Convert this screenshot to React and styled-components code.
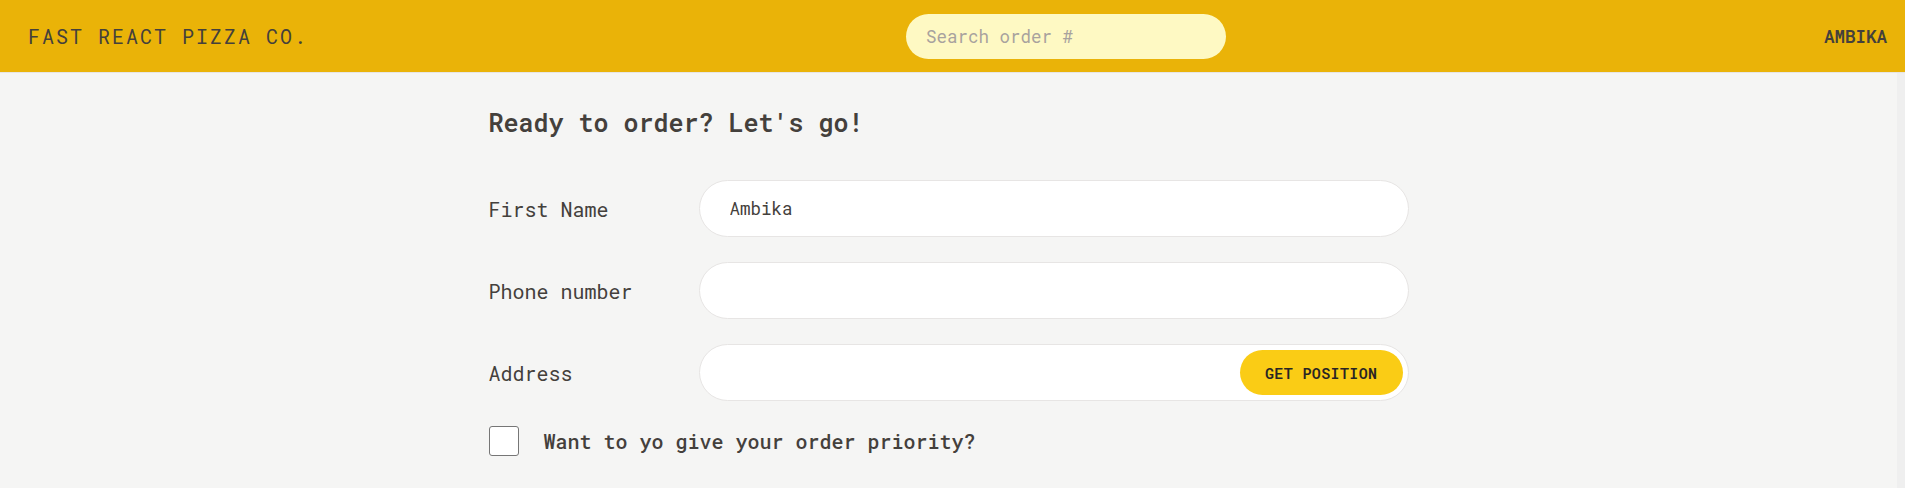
import React from 'react';
import styled, { createGlobalStyle } from 'styled-components';

const GlobalStyle = createGlobalStyle`
  html, body {
    margin: 0;
    padding: 0;
    height: 100%;
  }
  body {
    font-family: 'Roboto Mono', 'DejaVu Sans Mono', 'Liberation Mono', monospace;
    background-color: #f5f5f4;
    color: #44403c;
  }
  #root {
    height: 100%;
  }
`;

const Layout = styled.div`
  display: grid;
  grid-template-rows: auto 1fr;
  height: 100vh;
`;

const Header = styled.header`
  display: flex;
  align-items: center;
  justify-content: space-between;
  background-color: #eab308;
  padding: 13.5px 18px 13.5px 28px;
  border-bottom: 1px solid #e7e5e4;
  text-transform: uppercase;
`;

const Logo = styled.a`
  font-size: 20px;
  letter-spacing: 2px;
  color: #44403c;
  text-decoration: none;
`;

const SearchInput = styled.input`
  width: 320px;
  box-sizing: border-box;
  padding: 10px 20px;
  border: none;
  border-radius: 9999px;
  background-color: #fef9c3;
  font-family: inherit;
  font-size: 17.5px;
  line-height: 25px;
  color: #44403c;
  outline: none;

  &::placeholder {
    color: #a8a29e;
  }
`;

const UserName = styled.p`
  margin: 0;
  font-size: 17.5px;
  font-weight: 600;
  color: #44403c;
`;

/* the scroll area keeps a plain track strip on its right edge */
const Main = styled.div`
  overflow-y: auto;
  scrollbar-width: none;
  border-right: 8px solid #efefef;

  &::-webkit-scrollbar {
    display: none;
  }
`;

const Container = styled.main`
  max-width: 960px;
  margin: 0 auto;
  padding: 32px 20px 30px;
  box-sizing: border-box;
`;

const Title = styled.h2`
  margin: 0 0 40px;
  font-size: 25px;
  line-height: 35px;
  font-weight: 600;
`;

const Row = styled.div`
  display: flex;
  align-items: center;
  gap: 10px;
  margin-bottom: 25px;
`;

const Label = styled.label`
  flex: 0 0 200px;
  font-size: 20px;
  line-height: 30px;
`;

const Field = styled.div`
  position: relative;
  flex-grow: 1;
  display: flex;
`;

const Input = styled.input`
  flex-grow: 1;
  width: 100%;
  box-sizing: border-box;
  padding: 15px 30px;
  border: 1.25px solid #e7e5e4;
  border-radius: 9999px;
  background: #fff;
  font-family: inherit;
  font-size: 17.5px;
  line-height: 25px;
  color: #44403c;
  outline: none;
`;

const PositionButton = styled.button`
  position: absolute;
  top: 6px;
  right: 6px;
  padding: 12.5px 25px;
  border: none;
  border-radius: 9999px;
  background-color: #facc15;
  font-family: inherit;
  font-size: 15px;
  line-height: 20px;
  font-weight: 600;
  letter-spacing: 0.025em;
  text-transform: uppercase;
  color: #292524;
  cursor: pointer;
`;

const CheckRow = styled.div`
  display: flex;
  align-items: center;
  gap: 25px;
  margin-bottom: 60px;
`;

const Checkbox = styled.input`
  appearance: none;
  width: 30px;
  height: 30px;
  margin: 0;
  box-sizing: border-box;
  border: 1.5px solid #767676;
  border-radius: 3px;
  background: #fff;
`;

const CheckLabel = styled.label`
  font-size: 20px;
  line-height: 30px;
  font-weight: 500;
`;

const App = () => (
  <>
    <GlobalStyle />
    <Layout>
      <Header>
        <Logo href="/">Fast React Pizza Co.</Logo>
        <SearchInput placeholder="Search order #" />
        <UserName>Ambika</UserName>
      </Header>

      <Main>
        <Container>
          <Title>Ready to order? Let's go!</Title>

          <Row>
            <Label>First Name</Label>
            <Field>
              <Input type="text" defaultValue="Ambika" />
            </Field>
          </Row>

          <Row>
            <Label>Phone number</Label>
            <Field>
              <Input type="tel" />
            </Field>
          </Row>

          <Row>
            <Label>Address</Label>
            <Field>
              <Input type="text" />
              <PositionButton>Get position</PositionButton>
            </Field>
          </Row>

          <CheckRow>
            <Checkbox type="checkbox" id="priority" />
            <CheckLabel htmlFor="priority">Want to yo give your order priority?</CheckLabel>
          </CheckRow>
        </Container>
      </Main>
    </Layout>
  </>
);

export default App;
